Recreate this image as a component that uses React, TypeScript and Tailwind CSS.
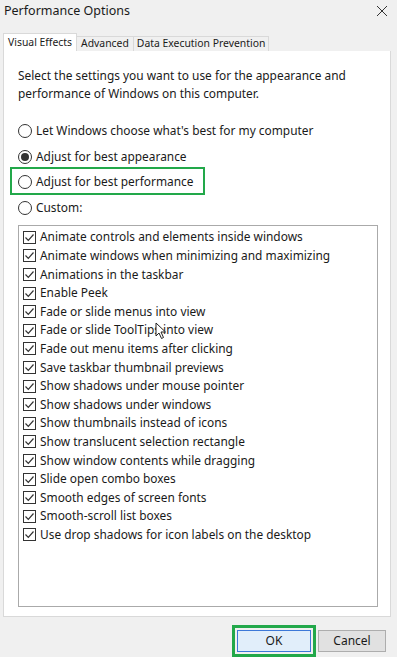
const effects = [
  "Animate controls and elements inside windows",
  "Animate windows when minimizing and maximizing",
  "Animations in the taskbar",
  "Enable Peek",
  "Fade or slide menus into view",
  "Fade or slide ToolTips into view",
  "Fade out menu items after clicking",
  "Save taskbar thumbnail previews",
  "Show shadows under mouse pointer",
  "Show shadows under windows",
  "Show thumbnails instead of icons",
  "Show translucent selection rectangle",
  "Show window contents while dragging",
  "Slide open combo boxes",
  "Smooth edges of screen fonts",
  "Smooth-scroll list boxes",
  "Use drop shadows for icon labels on the desktop",
];

const Radio = ({checked, label}: {checked?: boolean; label: string}) => (
  <div className="flex items-center h-[18px]">
    <span className="w-[14px] h-[14px] rounded-full border border-[#333] bg-white flex items-center justify-center">
      {checked && <span className="w-[8px] h-[8px] rounded-full bg-[#333]" />}
    </span>
    <span className="ml-[4px]">{label}</span>
  </div>
);

const CheckRow = ({label}: {label: string}) => (
  <div className="flex items-center h-[18.6px]">
    <span className="w-[13px] h-[13px] border border-[#333] bg-white flex items-center justify-center shrink-0">
      <svg width="11" height="11" viewBox="0 0 11 11">
        <path d="M1.5 5.5 L4.3 8.3 L9.5 2.5" fill="none" stroke="#333" strokeWidth="1.2" />
      </svg>
    </span>
    <span className="ml-[4px] whitespace-nowrap">{label}</span>
  </div>
);

export default function App() {
  return (
    <div className="w-[397px] h-[657px] bg-[#f0f0f0] text-[#1a1a1a] text-[11.9px] overflow-hidden relative"
         style={{fontFamily: '"Noto Sans", "Open Sans", sans-serif'}}>
      <div className="flex items-center justify-between h-[22px] pl-[4px] pr-[9px] text-[12.5px]">
        <span>Performance Options</span>
        <svg width="12" height="12" viewBox="0 0 12 12">
          <path d="M1 1 L11 11 M11 1 L1 11" stroke="#333" strokeWidth="1" />
        </svg>
      </div>

      <div className="flex items-end mt-[12px] pl-[3px] h-[17px] text-[10.4px]">
        <div className="h-[18px] bg-white border border-b-0 border-[#d9d9d9] px-[4px] flex items-center">Visual Effects</div>
        <div className="h-[15px] bg-[#f0f0f0] border-t border-r border-[#d9d9d9] px-[4px] flex items-center">Advanced</div>
        <div className="h-[15px] bg-[#f0f0f0] border-t border-r border-[#d9d9d9] px-[3px] flex items-center">Data Execution Prevention</div>
      </div>

      <div className="ml-[3px] w-[388px] h-[566px] bg-white border border-t-0 border-[#d9d9d9] pt-[15px] pl-[14px] relative">
        <div className="leading-[18px]">
          Select the settings you want to use for the appearance and<br />
          performance of Windows on this computer.
        </div>

        <div className="mt-[20px] flex flex-col gap-[7.7px]">
          <Radio label="Let Windows choose what's best for my computer" />
          <Radio checked label="Adjust for best appearance" />
          <Radio label="Adjust for best performance" />
          <Radio label="Custom:" />
        </div>

        <div className="absolute left-[6px] top-[116px] w-[195px] h-[28px] border-2 border-[#22a84a]" />

        <div className="mt-[8px] w-[360px] h-[382px] border border-[#aaaaaa] pl-[4px] pt-[2px]">
          {effects.map((e) => (
            <CheckRow key={e} label={e} />
          ))}
        </div>
      </div>

      <div className="flex justify-end gap-[7px] pr-[11px] mt-[13px] text-[12px]">
        <div className="relative">
          <div className="absolute -inset-[5px] border-[3px] border-[#22a84a]" />
          <div className="w-[74px] h-[22px] bg-[#e1eefa] border border-[#3c78d8] flex items-center justify-center">OK</div>
        </div>
        <div className="w-[68px] h-[22px] bg-[#e1e1e1] border border-[#adadad] flex items-center justify-center">Cancel</div>
      </div>

      <svg className="absolute left-[155px] top-[322px]" width="12" height="18" viewBox="0 0 12 18">
        <path d="M1 1 L1 14 L4 11 L6.5 16.5 L8.5 15.5 L6 10 L10.5 10 Z" fill="white" stroke="#222" strokeWidth="1" />
      </svg>
    </div>
  );
}
